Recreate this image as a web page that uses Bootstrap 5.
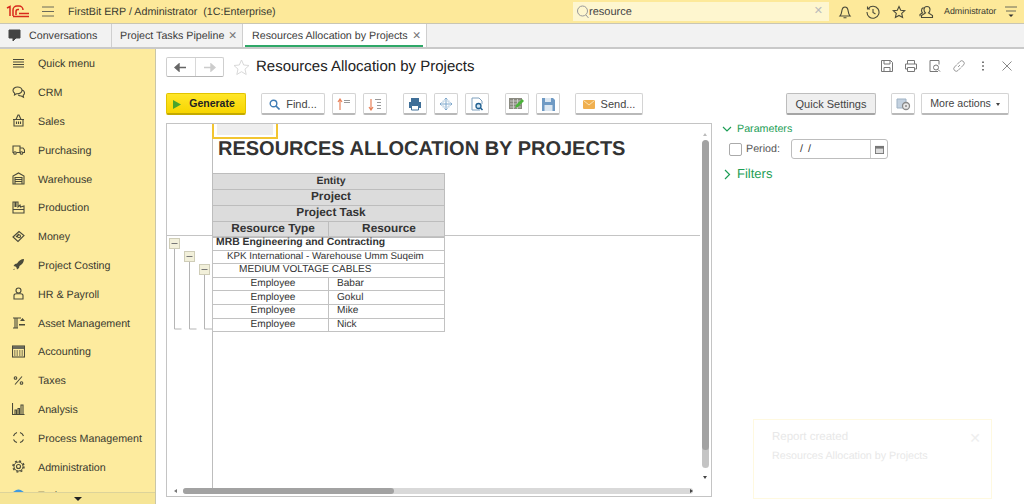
<!DOCTYPE html>
<html lang="en"><head><meta charset="utf-8"><title>Resources Allocation by Projects</title>
<link rel="stylesheet" href="https://cdn.jsdelivr.net/npm/bootstrap@5.3.0/dist/css/bootstrap.min.css">
<style>
html,body{height:504px;width:1024px;overflow:hidden}
body{font-family:"Liberation Sans",Arial,sans-serif;font-size:10.7px;color:#333;background:#fff;position:relative;text-rendering:geometricPrecision}
svg{display:block;flex:none}
.ico{fill:none;stroke:#4a4a3a;stroke-width:1.1}
.top-bar{height:24px;background:#fde99a;border-bottom:1px solid #c9c6b4;padding-left:6px}
.burger{margin-left:12px}
.top-title{margin-left:14px;font-size:10.7px;color:#3a3a30;white-space:pre;padding-top:2px}
.search-box{width:256px;height:19px;background:#fef6cf;margin-left:auto;padding:0 6px 0 3px;font-size:11px;color:#444;flex:none}
.search-text{margin-left:-1px;padding-top:2px}
.search-x{color:#bbb}
.m9{margin-left:9px}.m14{margin-left:14px}.m12{margin-left:12px}.m13{margin-left:13px}
.top-user{font-size:8.9px;margin-left:10px;color:#3a3a30;width:50px;white-space:nowrap}
.top-menu{margin:0 7px 0 11px}
.tab-bar{height:25px;background:#f2f2f2;border-bottom:2px solid #c9c9c9}
.tab-cell{height:23px;border-right:1px solid #cfcfcf;font-size:10.7px;color:#3c3c3c;padding:0 5px 0 8px;white-space:nowrap;flex:none}
.tab-cell span{padding-top:2px}
.tab-first{width:112px;padding-left:8px;gap:8px}
.tab-pipe{width:131px}
.tab-act{width:184px;background:#fff;position:relative;padding-left:9px}
.tab-act::after{content:"";position:absolute;left:2px;right:3px;bottom:0;height:2px;background:#2fa868}
.tab-x{margin-left:auto;color:#777;font-size:10.5px}
.main-area{height:455px}
.side-nav{width:156px;background:#fdeb9e;border-right:1px solid #c9c6a8;position:relative;overflow:hidden;flex:none}
.side-item{height:28.8px;padding-left:12px;gap:13px;color:#3a3a30;font-size:10.7px;flex:none}
.side-lbl{padding-top:2px}
.side-more{position:absolute;left:0;right:0;bottom:0;height:12px;background:#f6e596;border-top:1px solid #dcd39a}
.side-tri{width:0;height:0;border-left:4px solid transparent;border-right:4px solid transparent;border-top:4px solid #222;margin-top:4px}
.work-area{min-width:0;padding:8px 15px 7px 10px;position:relative}
.head-row{height:36px}
.nav-btns{width:58px;height:20px;border:1px solid #cfcfcf;border-bottom-color:#b5b5b5;border-radius:2px}
.nav-half{flex:1}
.nav-half+.nav-half{border-left:1px solid #d8d8d8}
.star-ic{margin:2px 0 0 9px}
.page-title{font-size:15px;color:#222;margin:0 0 0 6px;font-weight:400;line-height:20px}
.head-ics{gap:10px;margin:2px -5px 0 auto}
.tool-row{height:22px;margin-bottom:8px;gap:7px}
.tb{height:22px;background:#fff;border:1px solid #d4d4d4;border-bottom:2px solid #b9b9b9;border-radius:2px;color:#444;font-size:11px;padding:1px 0 0;--bs-btn-font-size:11px}
.tb-ic{width:24px}
.tb-gen{width:80px;background:linear-gradient(#ffe629,#f7d500);border-color:#e2c400;border-bottom-color:#c4aa00;color:#222;font-weight:700;gap:8px;margin-right:8px;font-size:10.5px;padding-right:4px}
.tb-find{width:64px;gap:6px}
.tb-send{width:68px;gap:6px}
.sep9{margin-left:9px}
.tb-qs{width:90px;background:#efefef;border-color:#bdbdbd;border-bottom-color:#a5a5a5;margin-right:8px;white-space:nowrap}
.tb-more{width:88px;gap:5px;margin-left:-1px;font-size:10.6px;white-space:nowrap}
.caret-mini{width:0;height:0;border-left:2.5px solid transparent;border-right:2.5px solid transparent;border-top:3px solid #444}
.panes{height:374px;gap:10px}
.report-box{width:546px;height:374px;border:1px solid #c4c4c4;position:relative;overflow:hidden;flex:none}
.rep-head{height:112px;border-bottom:1px solid #c4c4c4;margin-right:11px}
.gut{width:46px;border-right:1px solid #bdbdbd;flex:none}
.gut-body{height:258px}
.top-cell{width:66px;height:15px;border:2px solid #f2c531;border-top:0;padding:0 3px 2px;margin-left:-1px}
.top-cell div{background:#eee;height:100%}
.rep-title{font-size:20px;font-weight:700;color:#333;margin:0 0 14px 5px;line-height:20px;white-space:nowrap}
.sheet{border-collapse:collapse;table-layout:fixed;width:233px;color:#333;margin-left:-1px}
.sheet td{border:1px solid #c2c2c2;padding:0 0 0 5px;text-align:center;white-space:nowrap;overflow:hidden;line-height:1}
.sheet-h td{background:#dcdcdc;font-weight:700;border-color:#bdbdbd}
.colw{width:116px}
.fs-a{font-size:10.5px}.fs-b{font-size:11.8px}
.sheet .h15{height:15.500px}.sheet .h16{height:16px}
.sheet-b{height:95px}
.sheet-b td{font-size:10.1px;height:13.6px}
.sheet td.lft{text-align:left}
.sheet td.i1{padding-left:14px;font-size:9.8px}
.sheet td.i2{padding-left:26px}
.sheet td.i3{padding-left:3px;font-size:10.4px;font-weight:700}
.sheet td.i4{padding-left:8px}
.vs-bar{position:absolute;right:2px;top:16px;width:7px;height:328px;border-radius:4px;background:#c4c4c4;overflow:hidden}
.vs-bar div{height:310px;background:#a2a2a2;border-radius:4px}
.hs-bar{position:absolute;left:16px;bottom:2px;width:510px;height:6px;border-radius:3px;background:#d9d9d9}
.hs-bar div{width:211px;height:100%;background:#a2a2a2;border-radius:3px}
.ar{position:absolute;width:0;height:0}
.ar-u{right:4px;top:7px;border:2.5px solid transparent;border-bottom:3px solid #bbb}
.ar-d{right:4px;top:352px;border:2.5px solid transparent;border-top:3px solid #444}
.ar-l{left:5px;bottom:3px;border:2.5px solid transparent;border-right:3px solid #777}
.ar-r{left:523px;bottom:3px;border:2.5px solid transparent;border-left:3px solid #444}
.side-panel{min-width:0;color:#444}
.grn-head{color:#1d9e56;font-size:10.7px;height:12px;gap:5px}
.per-row{margin:4px 0 0 7px;height:20px}
.per-chk.form-check-input{width:13px;height:13px;margin:0 4px 0 0;border:1px solid #aaa;border-radius:2px;float:none}
.per-lbl{width:45px;color:#555}
.per-in{width:97px;height:20px;border:1px solid #bdbdbd;border-radius:3px}
.per-val{flex:1;padding-left:8px;word-spacing:2px;color:#333}
.per-cal{width:17px;height:100%;border-left:1px solid #ccc}
.grn-big{font-size:13px;height:14px;margin-top:8px}
.toast-note{position:absolute;left:753px;top:419px;width:239px;height:80px;border:1px solid #fff9e0;padding:10px 18px;color:#e8e8e8;background:#fff}
.toast-t{font-size:11.5px;margin-bottom:5px;line-height:14px}
.toast-l{line-height:14px}
.toast-x{position:absolute;right:10px;top:8px;font-size:14px;color:#eee}
</style></head><body>

<header class="top-bar d-flex align-items-center">
<svg width="24" height="13" viewBox="0 0 24 13"><path d="M1 3l3-1.500V11M7 11V5a4 4 0 0 1 4-4h2a4 4 0 0 1 4 4M10 10V6.500a2 2 0 0 1 2-2h1M7 11.500h16M13 8.500h10" fill="none" stroke="#d8281c" stroke-width="1.500"/></svg>
<svg class="burger" width="12" height="11" viewBox="0 0 12 11"><path d="M0 1h12M0 5.500h12M0 10h12" stroke="#6a6a5a" fill="none"/></svg>
<span class="top-title">FirstBit ERP / Administrator  (1C:Enterprise)</span>
<div class="search-box d-flex align-items-center">
<svg width="14" height="14" viewBox="0 0 14 14"><circle cx="6.500" cy="6" r="5" fill="none" stroke="#999"/><path d="M10 10l2.500 3" stroke="#999"/></svg>
<span class="search-text">resource</span><span class="ms-auto search-x">✕</span></div>
<svg class="m9" width="14" height="14" viewBox="0 0 14 14"><path class="ico" d="M2 11c1.500-1.500 1.500-2.500 2-6 .4-2 1.500-3 3-3s2.600 1 3 3c.5 3.500.5 4.500 2 6zM5.500 12.800h3"/></svg>
<svg class="m14" width="14" height="14" viewBox="0 0 14 14"><path class="ico" d="M2.300 3.500A6 6 0 1 1 1 7M1.500 1.500v2.500H4M7 4v3.500l2.500 1.500"/></svg>
<svg class="m12" width="14" height="14" viewBox="0 0 14 14"><path class="ico" d="M7 1.500l1.700 3.800 4 .4-3 2.700.9 4.100L7 10.400l-3.600 2.100.9-4.100-3-2.700 4-.4z"/></svg>
<svg class="m13" width="15" height="14" viewBox="0 0 15 14"><path class="ico" d="M8 1.500c2 0 3 1.500 3 3s-.5 2.500-1.500 3.500l4 2.500v2H2.500v-2l4-2.500C5.500 7 5 6 5 4.500s1-3 3-3zM4.500 2.500C3 3 2.500 4 2.500 5.500c0 1 .5 1.800 1 2.300L1 9.500v1.800"/></svg>
<span class="top-user">Administrator</span>
<svg class="top-menu" width="12" height="13" viewBox="0 0 12 13"><path d="M0 2h12M1 6h10" stroke="#6a6a5a" fill="none"/><path d="M3.500 9.500h5L6 12z" fill="#333"/></svg>
</header>

<nav class="tab-bar d-flex">
<div class="tab-cell tab-first d-flex align-items-center"><svg width="13" height="13" viewBox="0 0 13 13"><path d="M1 1h11v8H8l-3 3V9H1z" fill="#444" stroke="#444" stroke-linejoin="round"/></svg><span>Conversations</span></div>
<div class="tab-cell tab-pipe d-flex align-items-center"><span>Project Tasks Pipeline</span><span class="tab-x">✕</span></div>
<div class="tab-cell tab-act d-flex align-items-center"><span>Resources Allocation by Projects</span><span class="tab-x">✕</span></div>
</nav>

<div class="main-area d-flex">
<aside class="side-nav d-flex flex-column">
<a class="side-item d-flex align-items-center text-decoration-none"><svg width="13" height="13" viewBox="0 0 13 13"><path class="ico" d="M1 2.500h11M1 5h11M1 7.500h11M1 10h11"/></svg><span class="side-lbl">Quick menu</span></a>
<a class="side-item d-flex align-items-center text-decoration-none"><svg width="13" height="13" viewBox="0 0 13 13"><path class="ico" d="M5.500 1C3 1 1 2.500 1 4.500c0 1.200.7 2.200 1.700 2.800L2.500 9l2-1.300C7.500 8 10 6.500 10 4.500 10 2.500 8 1 5.500 1zM10.300 4c1.300.6 2.200 1.600 2.200 3 0 1-.6 1.800-1.300 2.300l.3 2-2.200-1.300c-1.300 0-2.300-.3-3-1"/></svg><span class="side-lbl">CRM</span></a>
<a class="side-item d-flex align-items-center text-decoration-none"><svg width="13" height="13" viewBox="0 0 13 13"><path class="ico" d="M1 5.500h11M2 5.500V12h9V5.500M4 5.500L6 1h1l2 4.500M4.500 7.500V10M6.500 7.500V10M8.500 7.500V10"/></svg><span class="side-lbl">Sales</span></a>
<a class="side-item d-flex align-items-center text-decoration-none"><svg width="13" height="13" viewBox="0 0 13 13"><path class="ico" d="M8 9.500H4.500M2 9.500H1V3h7v6.500M8 5h3l1.500 2v2.500H11"/><circle class="ico" cx="3" cy="10" r="1.300"/><circle class="ico" cx="9.500" cy="10" r="1.300"/></svg><span class="side-lbl">Purchasing</span></a>
<a class="side-item d-flex align-items-center text-decoration-none"><svg width="13" height="13" viewBox="0 0 13 13"><path class="ico" d="M1 12V4l5.500-3L12 4v8zM3 12V5.500h7V12M3 7.500h7M3 9.500h7"/></svg><span class="side-lbl">Warehouse</span></a>
<a class="side-item d-flex align-items-center text-decoration-none"><svg width="13" height="13" viewBox="0 0 13 13"><path class="ico" d="M1 12V1h2v4.500h1V1h2v5l2-2 .5 2 3.500-1v7zM1 8.500h11"/></svg><span class="side-lbl">Production</span></a>
<a class="side-item d-flex align-items-center text-decoration-none"><svg width="13" height="13" viewBox="0 0 13 13"><path class="ico" d="M1 7l6-5.500 5 4-6 6zM4 7l3-3"/><circle class="ico" cx="7" cy="6.300" r="1.500"/></svg><span class="side-lbl">Money</span></a>
<a class="side-item d-flex align-items-center text-decoration-none"><svg width="13" height="13" viewBox="0 0 13 13"><path d="M12 1c-3 0-5 1.500-7 4.500L3 6 1.500 8l2 .5 1 1 .5 2L7 10l.5-2c3-2 4.500-4 4.500-7zM2.500 10.500L1 12l1.500-.3z" fill="#4a4a3a"/></svg><span class="side-lbl">Project Costing</span></a>
<a class="side-item d-flex align-items-center text-decoration-none"><svg width="13" height="13" viewBox="0 0 13 13"><circle class="ico" cx="6.500" cy="3.500" r="2.500"/><path class="ico" d="M2 12V8.500C2 7.500 3 6.800 4.500 6.800h4C10 6.800 11 7.500 11 8.500V12z"/></svg><span class="side-lbl">HR &amp; Payroll</span></a>
<a class="side-item d-flex align-items-center text-decoration-none"><svg width="13" height="13" viewBox="0 0 13 13"><path class="ico" d="M1 2h8M3 2v10M1 12h5M5 2v10"/><path d="M8 5h5l-2.500-3zM7 8h6v1.500H7z" fill="#4a4a3a"/></svg><span class="side-lbl">Asset Management</span></a>
<a class="side-item d-flex align-items-center text-decoration-none"><svg width="13" height="13" viewBox="0 0 13 13"><rect class="ico" x=".5" y="1" width="12" height="11"/><path d="M1 1h11v3H1z" fill="#6a6a5a"/><path class="ico" stroke-dasharray="1.500 1" d="M2 6h9M2 8h9M2 10h9"/></svg><span class="side-lbl">Accounting</span></a>
<a class="side-item d-flex align-items-center text-decoration-none"><svg width="13" height="13" viewBox="0 0 13 13"><path class="ico" stroke-width="1.500" d="M3 10.500l7-8"/><circle class="ico" cx="3.500" cy="4" r="1.300"/><circle class="ico" cx="9.500" cy="9" r="1.300"/></svg><span class="side-lbl">Taxes</span></a>
<a class="side-item d-flex align-items-center text-decoration-none"><svg width="13" height="13" viewBox="0 0 13 13"><path class="ico" d="M.5 1v11.500h12M3 12V8h1.500v4M6 12V6.500h1.500V12M9 12V3h2v9"/></svg><span class="side-lbl">Analysis</span></a>
<a class="side-item d-flex align-items-center text-decoration-none"><svg width="13" height="13" viewBox="0 0 13 13"><path class="ico" stroke-width="1.300" d="M1.500 5A5.300 5.300 0 0 1 5 1.500M8 1.500A5.300 5.300 0 0 1 11.500 5M11.500 8.500A5.300 5.300 0 0 1 8 11.500M5 11.500A5.300 5.300 0 0 1 1.500 8.500"/></svg><span class="side-lbl">Process Management</span></a>
<a class="side-item d-flex align-items-center text-decoration-none"><svg width="13" height="13" viewBox="0 0 13 13"><circle class="ico" cx="6.500" cy="6.500" r="2"/><circle cx="6.500" cy="6.500" r="4.500" fill="none" stroke="#4a4a3a" stroke-width="1"/><circle cx="6.500" cy="6.500" r="5.500" fill="none" stroke="#4a4a3a" stroke-width="1.500" stroke-dasharray="2 2.320"/></svg><span class="side-lbl">Administration</span></a>
<a class="side-item d-flex align-items-center text-decoration-none"><svg width="13" height="13" viewBox="0 0 13 13"><circle cx="6.500" cy="6.500" r="6" fill="#3f9be0"/></svg><span class="side-lbl">Tasks</span></a>
<div class="side-more d-flex justify-content-center"><span class="side-tri"></span></div>
</aside>

<section class="work-area flex-grow-1 d-flex flex-column">
<div class="head-row d-flex align-items-start">
<div class="nav-btns d-flex">
<div class="nav-half d-flex align-items-center justify-content-center"><svg width="13" height="9" viewBox="0 0 13 9"><path d="M12 4.500H4M5 1L1 4.500 5 8z" fill="#666" stroke="#666" stroke-width="1.400"/></svg></div>
<div class="nav-half d-flex align-items-center justify-content-center"><svg width="13" height="9" viewBox="0 0 13 9"><path d="M1 4.500h8M8 1l4 3.500L8 8z" fill="#ccc" stroke="#ccc" stroke-width="1.400"/></svg></div></div>
<svg class="star-ic" width="17" height="17" viewBox="0 0 17 17"><path d="M8.500 1l2.200 5 5.300.5-4 3.600 1.200 5.400-4.700-2.800-4.700 2.800 1.200-5.400-4-3.600 5.300-.5z" fill="none" stroke="#d9d9d9"/></svg>
<h1 class="page-title">Resources Allocation by Projects</h1>
<div class="head-ics d-flex align-items-center">
<svg width="14" height="14" viewBox="0 0 14 14"><path d="M1.500 1.500h9l2 2v9h-11zM4 1.500v3.500h6V1.500M4 12.500V8.500h6v4" fill="none" stroke="#777"/></svg>
<svg width="14" height="14" viewBox="0 0 14 14"><path d="M3.500 5V1.500h7V5M3.500 10h-2V5h11v5h-2M3.500 8.500h7v4h-7z" fill="none" stroke="#777"/></svg>
<svg width="14" height="14" viewBox="0 0 14 14"><path d="M10 12.500H2v-11h9v4" fill="none" stroke="#777"/><circle cx="8" cy="8.500" r="2.500" fill="none" stroke="#777"/><path d="M10 10.500l2 2" stroke="#777"/></svg>
<svg width="14" height="14" viewBox="0 0 14 14"><path d="M6 8l2-2M5 5.500L2.500 8a2.400 2.400 0 0 0 3.500 3.500L8.500 9M5.500 5L8 2.500A2.400 2.400 0 0 1 11.500 6L9 8.500" fill="none" stroke="#999"/></svg>
<svg width="14" height="14" viewBox="0 0 14 14"><path d="M7 2.500v1.500M7 6.300v1.500M7 10v1.500" stroke="#555" stroke-width="1.600"/></svg>
<svg width="14" height="14" viewBox="0 0 14 14"><path d="M2.500 2.500l9 9M11.500 2.500l-9 9" stroke="#888"/></svg>
</div></div>

<div class="tool-row d-flex">
<button class="btn tb tb-gen d-flex align-items-center justify-content-center"><svg width="8" height="9" viewBox="0 0 8 9"><path d="M0 0l8 4.500L0 9z" fill="#4aa42e"/></svg>Generate</button>
<button class="btn tb tb-find d-flex align-items-center justify-content-center"><svg width="11" height="11" viewBox="0 0 11 11"><circle cx="4.500" cy="4.500" r="3.300" fill="none" stroke="#3f7cb5" stroke-width="1.400"/><path d="M7 7l3.500 3.500" stroke="#3f7cb5" stroke-width="1.600"/></svg>Find...</button>
<button class="btn tb tb-ic d-flex align-items-center justify-content-center"><svg width="14" height="13" viewBox="0 0 14 13"><path d="M3 12V2M1 4l2-3 2 3" fill="none" stroke="#e8825a" stroke-width="1.200"/><path d="M7 2h6v1H7zM7 4h6v1H7z" fill="#999"/></svg></button>
<button class="btn tb tb-ic d-flex align-items-center justify-content-center"><svg width="14" height="13" viewBox="0 0 14 13"><path d="M3 1v10M1 9l2 3 2-3" fill="none" stroke="#e8825a" stroke-width="1.200"/><path d="M7 1h6v1H7zM9 4h4v1H9zM9 7h4v1H9zM9 10h4v1H9z" fill="#999"/></svg></button>
<button class="btn tb tb-ic sep9 d-flex align-items-center justify-content-center"><svg width="14" height="13" viewBox="0 0 14 13"><path d="M3 0h8v4H3zM1 4h12v6H1z" fill="#3f6f98"/><path d="M3.500 7.500h7V12h-7z" fill="#fff" stroke="#3f6f98"/></svg></button>
<button class="btn tb tb-ic d-flex align-items-center justify-content-center"><svg width="14" height="14" viewBox="0 0 14 14"><path d="M7 1v12M1 7h12M5.500 2.500L7 1l1.500 1.500M5.500 11.500L7 13l1.500-1.500M2.500 5.500L1 7l1.500 1.500M11.500 5.500L13 7l-1.500 1.500" fill="none" stroke="#7fa8cc"/><rect x="4" y="4" width="6" height="6" fill="none" stroke="#b8cfe2"/></svg></button>
<button class="btn tb tb-ic d-flex align-items-center justify-content-center"><svg width="13" height="14" viewBox="0 0 13 14"><path d="M9 13H1V1h7l3 3v3" fill="none" stroke="#7fa0bd"/><circle cx="7.500" cy="9" r="2.500" fill="#cfe3f2" stroke="#1f5f90" stroke-width="1.300"/><path d="M9.500 11l2 2" stroke="#1f5f90" stroke-width="1.600"/></svg></button>
<button class="btn tb tb-ic sep9 d-flex align-items-center justify-content-center"><svg width="16" height="14" viewBox="0 0 16 14"><path d="M0 1h13v11H0z" fill="#8a8a80"/><path d="M1 4h11M1 7h11M1 10h11M4.500 2v10M8.500 2v10" stroke="#ddd" stroke-width=".7"/><path d="M6 11l1-3 6-6 2 2-6 6z" fill="#4bb33a"/></svg></button>
<button class="btn tb tb-ic d-flex align-items-center justify-content-center"><svg width="13" height="13" viewBox="0 0 13 13"><path d="M0 0h11l2 2v11H0z" fill="#6f9ac4"/><path d="M3 0h6v4H3z" fill="#dce7f1"/><path d="M2.500 7h8v6h-8z" fill="#dce7f1"/></svg></button>
<button class="btn tb tb-send ms-2 d-flex align-items-center justify-content-center"><svg width="12" height="9" viewBox="0 0 12 9"><rect width="12" height="9" rx="1" fill="#f0b050"/><path d="M.5.500L6 5l5.500-4.500" fill="none" stroke="#fbe2b4"/></svg>Send...</button>
<button class="btn tb tb-qs ms-auto">Quick Settings</button>
<button class="btn tb tb-ic d-flex align-items-center justify-content-center"><svg width="15" height="14" viewBox="0 0 15 14"><path d="M1 2h9v9H1z" fill="#c4d2e0" stroke="#9fb2c4"/><circle cx="10" cy="9" r="3.500" fill="#e8e8e8" stroke="#8a8a8a" stroke-width="1.300"/><circle cx="10" cy="9" r="1" fill="#8a8a8a"/></svg></button>
<button class="btn tb tb-more d-flex align-items-center justify-content-center">More actions<span class="caret-mini"></span></button>
</div>

<div class="panes d-flex">
<div class="report-box">
<div class="rep-head d-flex">
<div class="gut"></div>
<div>
<div class="top-cell"><div></div></div>
<h2 class="rep-title">RESOURCES ALLOCATION BY PROJECTS</h2>
<table class="sheet sheet-h">
<tr><td colspan="2" class="fs-a h15">Entity</td></tr>
<tr><td colspan="2" class="fs-b h16">Project</td></tr>
<tr><td colspan="2" class="fs-b h16">Project Task</td></tr>
<tr><td class="fs-b h16 colw">Resource Type</td><td class="fs-b h16">Resource</td></tr>
</table></div></div>
<div class="d-flex">
<div class="gut gut-body">
<svg width="45" height="100" viewBox="0 0 45 100"><g fill="none" stroke="#b5b5b5"><path d="M7.500 12v81h7M22.500 25v68h7M37.500 38v55h8"/><g fill="#f2f0da" stroke="#cfcdb8"><rect x="2.500" y="2.500" width="10" height="10"/><rect x="17.500" y="15.500" width="10" height="10"/><rect x="32.500" y="28.500" width="10" height="10"/></g><path d="M4.500 7.500h6M19.500 20.500h6M34.500 33.500h6" stroke="#777"/></g></svg>
</div>
<table class="sheet sheet-b align-self-start">
<tr><td colspan="2" class="lft i3">MRB Engineering and Contracting</td></tr>
<tr><td colspan="2" class="lft i1">KPK International - Warehouse Umm Suqeim</td></tr>
<tr><td colspan="2" class="lft i2">MEDIUM VOLTAGE CABLES</td></tr>
<tr><td class="colw">Employee</td><td class="lft i4">Babar</td></tr>
<tr><td>Employee</td><td class="lft i4">Gokul</td></tr>
<tr><td>Employee</td><td class="lft i4">Mike</td></tr>
<tr><td>Employee</td><td class="lft i4">Nick</td></tr>
</table></div>
<span class="ar ar-u"></span><div class="vs-bar"><div></div></div><span class="ar ar-d"></span>
<span class="ar ar-l"></span><div class="hs-bar"><div></div></div><span class="ar ar-r"></span>
</div>
<div class="side-panel flex-grow-1">
<div class="grn-head d-flex align-items-center"><svg width="10" height="7" viewBox="0 0 10 7"><path d="M1 1l4 4 4-4" fill="none" stroke="#1d9e56" stroke-width="1.200"/></svg>Parameters</div>
<div class="per-row d-flex align-items-center">
<input class="form-check-input per-chk" type="checkbox" aria-label="Period">
<span class="per-lbl">Period:</span>
<div class="per-in d-flex align-items-center"><span class="per-val">/ /</span><span class="per-cal d-flex align-items-center justify-content-center"><svg width="9" height="9" viewBox="0 0 10 10"><path d="M0 1h10v9H0z" fill="#777"/><path d="M1 4h8v5H1z" fill="#ddd"/></svg></span></div>
</div>
<div class="grn-head grn-big d-flex align-items-center"><svg width="10" height="11" viewBox="0 0 10 11"><path d="M3 1l4.500 4.500L3 10" fill="none" stroke="#1d9e56" stroke-width="1.200"/></svg>Filters</div>
</div>
</div>
</section>
</div>

<div class="toast-note"><div class="toast-t">Report created</div><div class="toast-l">Resources Allocation by Projects</div><span class="toast-x">✕</span></div>
</body></html>
